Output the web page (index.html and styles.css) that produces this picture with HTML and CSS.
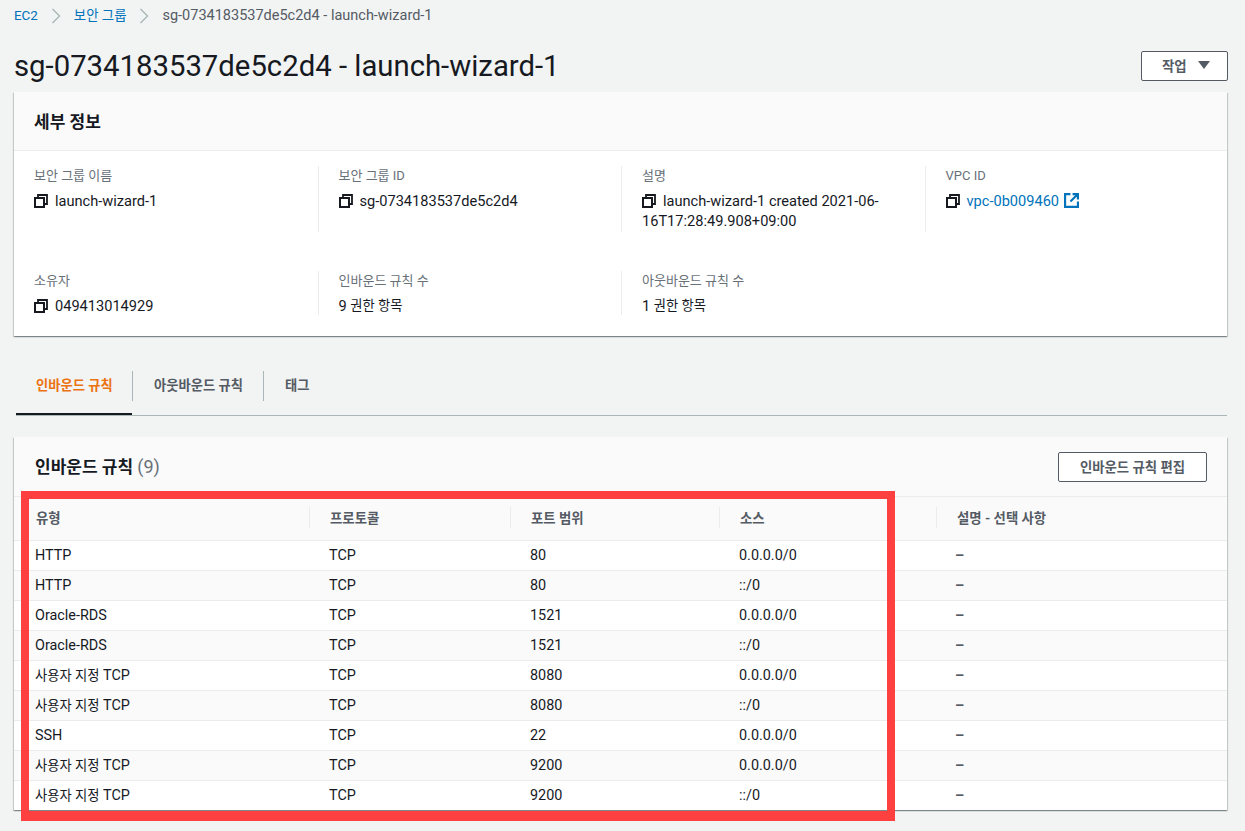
FILE: index.html
```html
<!DOCTYPE html>
<html lang="ko">
<head>
    <meta charset="UTF-8">
    <title>sg-0734183537de5c2d4 - launch-wizard-1</title>
    <link rel="stylesheet" href="styles.css">
</head>
<body>
    <svg class="defs" width="0" height="0">
        <symbol id="copy" viewBox="0 0 14 14">
            <path d="M4 3.5V1h9v9h-2.5" fill="none" stroke="#16191f" stroke-width="1.8"/>
            <rect x="1" y="4" width="9" height="9" fill="none" stroke="#16191f" stroke-width="2"/>
        </symbol>
    </svg>

    <nav class="crumbs">
        <a href="#">EC2</a>
        <svg class="chev" viewBox="0 0 10 16"><path d="M1.5 1l7 7-7 7" fill="none" stroke="#aab7b8" stroke-width="1.4"/></svg>
        <a href="#">보안 그룹</a>
        <svg class="chev" viewBox="0 0 10 16"><path d="M1.5 1l7 7-7 7" fill="none" stroke="#aab7b8" stroke-width="1.4"/></svg>
        <span class="crumb-last">sg-0734183537de5c2d4 - launch-wizard-1</span>
    </nav>

    <header class="title-row">
        <h1>sg-0734183537de5c2d4 - launch-wizard-1</h1>
        <button class="btn btn-action">작업<span class="caret"></span></button>
    </header>

    <section class="card">
        <div class="card-head">
            <h2>세부 정보</h2>
        </div>
        <div class="details">
            <div class="item">
                <div class="item-label">보안 그룹 이름</div>
                <div class="item-value"><svg class="copy"><use href="#copy"/></svg><span>launch-wizard-1</span></div>
            </div>
            <div class="item">
                <div class="item-label">보안 그룹 ID</div>
                <div class="item-value"><svg class="copy"><use href="#copy"/></svg><span>sg-0734183537de5c2d4</span></div>
            </div>
            <div class="item">
                <div class="item-label">설명</div>
                <div class="item-value"><svg class="copy"><use href="#copy"/></svg><span class="wrap">launch-wizard-1 created 2021-06-<br><span class="outdent">16T17:28:49.908+09:00</span></span></div>
            </div>
            <div class="item">
                <div class="item-label">VPC ID</div>
                <div class="item-value">
                    <svg class="copy"><use href="#copy"/></svg>
                    <a href="#">vpc-0b009460</a>
                    <svg class="ext" viewBox="0 0 14 14"><path d="M6 1H1v12h12V8M8 1h5v5M13 1L6 8" fill="none" stroke="#0073bb" stroke-width="2"/></svg>
                </div>
            </div>
            <div class="item item-low">
                <div class="item-label">소유자</div>
                <div class="item-value"><svg class="copy"><use href="#copy"/></svg><span>049413014929</span></div>
            </div>
            <div class="item item-low">
                <div class="item-label">인바운드 규칙 수</div>
                <div class="item-value">9&nbsp;<span class="ko">권한 항목</span></div>
            </div>
            <div class="item item-low">
                <div class="item-label">아웃바운드 규칙 수</div>
                <div class="item-value">1&nbsp;<span class="ko">권한 항목</span></div>
            </div>
        </div>
    </section>

    <div class="tabs">
        <a class="tab active" href="#">인바운드 규칙</a>
        <a class="tab" href="#">아웃바운드 규칙</a>
        <a class="tab" href="#">태그</a>
    </div>

    <section class="card rules">
        <div class="rules-head">
            <h2>인바운드 규칙 <span class="count">(9)</span></h2>
            <button class="btn btn-edit">인바운드 규칙 편집</button>
        </div>
        <table>
            <colgroup>
                <col class="col-type"><col class="col-proto"><col class="col-port"><col class="col-src"><col class="col-desc">
            </colgroup>
            <thead>
                <tr>
                    <th>유형</th>
                    <th>프로토콜</th>
                    <th>포트 범위</th>
                    <th>소스</th>
                    <th>설명 - 선택 사항</th>
                </tr>
            </thead>
            <tbody>
                <tr><td>HTTP</td><td>TCP</td><td>80</td><td>0.0.0.0/0</td><td>–</td></tr>
                <tr><td>HTTP</td><td>TCP</td><td>80</td><td>::/0</td><td>–</td></tr>
                <tr><td>Oracle-RDS</td><td>TCP</td><td>1521</td><td>0.0.0.0/0</td><td>–</td></tr>
                <tr><td>Oracle-RDS</td><td>TCP</td><td>1521</td><td>::/0</td><td>–</td></tr>
                <tr><td><span class="ko">사용자 지정</span> TCP</td><td>TCP</td><td>8080</td><td>0.0.0.0/0</td><td>–</td></tr>
                <tr><td><span class="ko">사용자 지정</span> TCP</td><td>TCP</td><td>8080</td><td>::/0</td><td>–</td></tr>
                <tr><td>SSH</td><td>TCP</td><td>22</td><td>0.0.0.0/0</td><td>–</td></tr>
                <tr><td><span class="ko">사용자 지정</span> TCP</td><td>TCP</td><td>9200</td><td>0.0.0.0/0</td><td>–</td></tr>
                <tr><td><span class="ko">사용자 지정</span> TCP</td><td>TCP</td><td>9200</td><td>::/0</td><td>–</td></tr>
            </tbody>
        </table>
    </section>

    <!-- 강조 표시 -->
    <div class="highlight"></div>
</body>
</html>
```

FILE: styles.css
```css
html, body {
    height: 100%;
}
body {
    position: relative;
    margin: 0;
    padding: 0 18px 0 14px;
    height: 831px;
    overflow: hidden;
    box-sizing: border-box;
    background-color: #f2f3f3;
    font-family: Roboto, "Noto Sans CJK KR", sans-serif;
    font-size: 14.4px;
    line-height: 20px;
    color: #16191f;
}
a {
    color: #0073bb;
    text-decoration: none;
}
.ko {
    font-size: 13.3px;
}
.defs {
    position: absolute;
}
.crumbs {
    display: flex;
    align-items: center;
    height: 32px;
    font-size: 13.4px;
    color: #545b64;
}
.crumb-last {
    font-size: 14.5px;
}
.chev {
    width: 10px;
    height: 16px;
    margin: 0 13px 0 13px;
}
.title-row {
    display: flex;
    justify-content: space-between;
    align-items: center;
    height: 60px;
    padding-top: 8px;
    box-sizing: border-box;
}
h1 {
    margin: 0;
    font-size: 29.3px;
    font-weight: 400;
    line-height: 36px;
}
.btn {
    height: 30px;
    padding: 0 0 2px;
    background-color: #fff;
    border: 1px solid #545b64;
    border-radius: 2px;
    font-family: inherit;
    font-size: 13.4px;
    font-weight: 700;
    color: #545b64;
}
.btn-action {
    display: flex;
    align-items: center;
    width: 87px;
    padding-left: 20px;
    margin-right: -1px;
}
.caret {
    width: 0;
    height: 0;
    margin-left: 11px;
    border-left: 6px solid transparent;
    border-right: 6px solid transparent;
    border-top: 8px solid #545b64;
}
.btn-edit {
    width: 149px;
}
.card {
    background-color: #fff;
    box-shadow: 0 1px 1px 0 rgba(0, 28, 36, 0.3), 1px 1px 1px 0 rgba(0, 28, 36, 0.15), -1px 1px 1px 0 rgba(0, 28, 36, 0.15);
}
.card-head {
    height: 59px;
    box-sizing: border-box;
    padding: 19px 20px;
    background-color: #fafafa;
    border-bottom: 1px solid #eaeded;
}
h2 {
    margin: 0;
    font-size: 17px;
    font-weight: 700;
    line-height: 22px;
}
.details {
    display: grid;
    grid-template-columns: repeat(4, 303.5px);
    align-content: start;
    row-gap: 39px;
    padding-top: 15px;
    height: 185px;
    box-sizing: border-box;
}
.item {
    box-sizing: border-box;
    height: 66px;
    padding: 0 20px;
    border-left: 1px solid #eaeded;
    font-size: 14.6px;
}
.item:nth-child(1), .item:nth-child(5) {
    border-left: none;
}
.item-low {
    height: 44px;
}
.item-label {
    margin-bottom: 5px;
    font-size: 13px;
    color: #687078;
}
.item-value {
    display: flex;
    align-items: flex-start;
    gap: 7px;
}
.item-low .item-value {
    gap: 0;
}
.item:nth-child(5) .item-value {
    gap: 7px;
}
.wrap {
    width: 240px;
}
.outdent {
    margin-left: -21px;
}
.copy {
    flex: none;
    width: 14px;
    height: 14px;
    margin-top: 3px;
}
.ext {
    width: 15px;
    height: 15px;
    margin-top: 2px;
    margin-left: -2px;
}
.tabs {
    display: flex;
    margin: 20px 0 0 2px;
    height: 60px;
    padding-top: 15px;
    box-sizing: border-box;
    border-bottom: 1px solid #aab7b8;
}
.tab {
    position: relative;
    height: 44px;
    box-sizing: border-box;
    padding: 0 20px 0 22px;
    line-height: 30px;
    font-size: 13.3px;
    font-weight: 700;
    color: #545b64;
}
.tab + .tab::before {
    content: "";
    position: absolute;
    left: 0;
    top: 0;
    height: 30px;
    border-left: 1px solid #aab7b8;
}
.tab.active {
    width: 116px;
    padding: 0 0 0 20px;
    color: #ec7211;
    border-bottom: 2px solid #16191f;
}
.rules {
    margin-top: 21px;
}
.rules-head {
    display: flex;
    justify-content: space-between;
    align-items: center;
    height: 60px;
    box-sizing: border-box;
    padding: 0 20px 0 21px;
    background-color: #fafafa;
    border-bottom: 1px solid #eaeded;
}
.count {
    font-size: 18px;
    font-weight: 400;
    color: #687078;
}
table {
    width: 100%;
    table-layout: fixed;
    border-collapse: collapse;
}
.col-type { width: 295px; }
.col-proto { width: 201px; }
.col-port { width: 209px; }
.col-src { width: 217px; }
th {
    position: relative;
    height: 43px;
    box-sizing: border-box;
    padding: 1px 20px 0 21px;
    text-align: left;
    font-size: 13.4px;
    font-weight: 700;
    color: #545b64;
    background-color: #fafafa;
    border-bottom: 1px solid #eaeded;
}
th:first-child {
    padding-left: 22px;
}
th + th::before {
    content: "";
    position: absolute;
    left: 0;
    top: 10px;
    height: 21px;
    border-left: 1px solid #eaeded;
}
td {
    height: 30px;
    box-sizing: border-box;
    padding: 2px 20px 0;
    border-bottom: 1px solid #eaeded;
}
td:first-child {
    padding-left: 21px;
}
td:last-child {
    padding-left: 19px;
    font-weight: 700;
    color: #545b64;
}
tbody tr:nth-child(even) td {
    background-color: #fafafa;
}
tbody tr:last-child td {
    border-bottom: none;
}
.highlight {
    position: absolute;
    left: 21px;
    top: 491px;
    width: 874px;
    height: 330px;
    box-sizing: border-box;
    border: 8px solid #ff4040;
    border-bottom-width: 10px;
}
```
